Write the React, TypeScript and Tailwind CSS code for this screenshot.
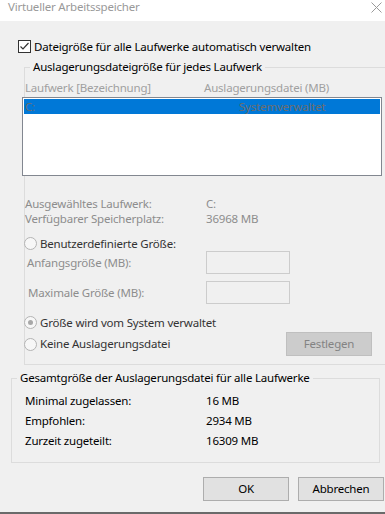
import React from "react";

const font = "font-['Segoe_UI','Noto_Sans',sans-serif] text-[11.5px] tracking-[-0.2px]";

function Radio({ checked }: { checked?: boolean }) {
  return (
    <span className="flex h-[13px] w-[13px] shrink-0 items-center justify-center rounded-full border border-[#b4b4b4] bg-[#f7f7f7]">
      {checked && <span className="h-[5px] w-[5px] rounded-full bg-[#a8a8a8]" />}
    </span>
  );
}

export default function App() {
  return (
    <div className={`flex h-[514px] w-[385px] flex-col overflow-hidden bg-[#f0f0f0] ${font} text-black`}>
      {/* Titelleiste */}
      <div className="flex h-[21px] shrink-0 items-start justify-between bg-white pl-[8px] pr-[2px]">
        <span className="leading-[14px] text-[#999999]">Virtueller Arbeitsspeicher</span>
        <svg width="11" height="11" viewBox="0 0 11 11" className="mt-[2px] mr-[1px]">
          <path d="M0.5 0.5 L10.5 10.5 M10.5 0.5 L0.5 10.5" stroke="#9a9a9a" strokeWidth="1" />
        </svg>
      </div>

      {/* Checkbox */}
      <div className="ml-[18px] mt-[19px] flex h-[13px] items-center gap-[3px]">
        <span className="flex h-[13px] w-[13px] shrink-0 items-center justify-center border border-[#333333] bg-white">
          <svg width="11" height="11" viewBox="0 0 11 11">
            <path d="M1.5 5.5 L4 8 L9.5 2" fill="none" stroke="#333333" strokeWidth="1.2" />
          </svg>
        </span>
        <span className="leading-[15px]">Dateigröße für alle Laufwerke automatisch verwalten</span>
      </div>

      {/* Gruppe 1 */}
      <fieldset className="ml-[24px] mt-[6px] w-[380px] shrink-0 border border-r-0 border-[#dcdcdc] pb-[8px]">
        <legend className="ml-[5px] px-[3px] leading-[16px]">Auslagerungsdateigröße für jedes Laufwerk</legend>

        <div className="mt-[5px] flex h-[15px] items-center leading-[15px] text-[#a0a0a0]">
          <span className="w-[179px]">Laufwerk [Bezeichnung]</span>
          <span>Auslagerungsdatei (MB)</span>
        </div>

        <div className="-ml-[3px] mt-[2px] h-[79px] w-[360px] border border-[#828790] bg-white p-[1px]">
          <div className="flex h-[15px] items-center bg-[#0078d7] pl-[1px] leading-[15px] text-[#6d6d6d]">
            <span className="w-[214px]">C:</span>
            <span>Systemverwaltet</span>
          </div>
        </div>

        <div className="mt-[20px] text-[#8d8d8d]">
          <div className="flex h-[15px] items-center">
            <span className="w-[181px]">Ausgewähltes Laufwerk:</span>
            <span>C:</span>
          </div>
          <div className="flex h-[15px] items-center">
            <span className="w-[181px]">Verfügbarer Speicherplatz:</span>
            <span>36968 MB</span>
          </div>
        </div>

        <div className="-ml-[1px] mt-[10px] flex h-[15px] items-center gap-[3px] text-[#333333]">
          <Radio />
          <span>Benutzerdefinierte Größe:</span>
        </div>

        <div className="flex h-[23px] items-center text-[#8d8d8d]">
          <span className="ml-[2px] w-[179px]">Anfangsgröße (MB):</span>
          <span className="h-[23px] w-[84px] border border-[#cccccc] bg-[#f0f0f0]" />
        </div>
        <div className="mt-[7px] flex h-[23px] items-center text-[#8d8d8d]">
          <span className="ml-[3px] w-[178px]">Maximale Größe (MB):</span>
          <span className="h-[23px] w-[84px] border border-[#cccccc] bg-[#f0f0f0]" />
        </div>

        <div className="-ml-[1px] mt-[11px] flex h-[15px] items-center gap-[3px] text-[#333333]">
          <Radio checked />
          <span>Größe wird vom System verwaltet</span>
        </div>

        <div className="-ml-[1px] mt-[2px] flex h-[24px] items-center">
          <div className="flex w-[262px] items-center gap-[3px] text-[#333333]">
            <Radio />
            <span>Keine Auslagerungsdatei</span>
          </div>
          <span className="flex h-[24px] w-[86px] items-center justify-center border border-[#bfbfbf] bg-[#cccccc] text-[#838383]">
            Festlegen
          </span>
        </div>
      </fieldset>

      {/* Gruppe 2 */}
      <fieldset className="ml-[11px] mt-[5px] w-[369px] shrink-0 border border-[#dcdcdc] pb-[11px]">
        <legend className="ml-[5px] px-[3px] leading-[16px]">Gesamtgröße der Auslagerungsdatei für alle Laufwerke</legend>
        <div className="mt-[5px] pl-[13px] leading-[20px]">
          <div className="flex">
            <span className="w-[181px]">Minimal zugelassen:</span>
            <span>16 MB</span>
          </div>
          <div className="flex">
            <span className="w-[181px]">Empfohlen:</span>
            <span>2934 MB</span>
          </div>
          <div className="flex">
            <span className="w-[181px]">Zurzeit zugeteilt:</span>
            <span>16309 MB</span>
          </div>
        </div>
      </fieldset>

      {/* Buttons */}
      <div className="ml-[203px] mt-[14px] flex gap-[9px]">
        <button className="h-[24px] w-[86px] border border-[#adadad] bg-[#e1e1e1]">OK</button>
        <button className="h-[24px] w-[86px] border border-[#adadad] bg-[#e1e1e1]">Abbrechen</button>
      </div>

      <div className="flex-1" />
      <div className="h-[2px] shrink-0 bg-[#6a6a6a]" />
    </div>
  );
}
